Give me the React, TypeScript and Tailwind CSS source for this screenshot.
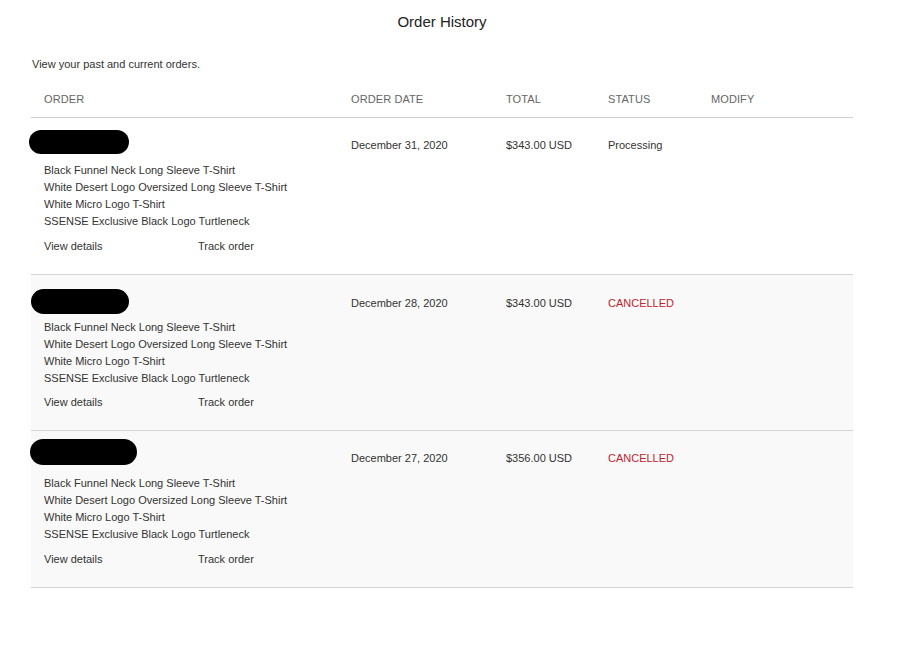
import React from "react";

const items = [
  "Black Funnel Neck Long Sleeve T-Shirt",
  "White Desert Logo Oversized Long Sleeve T-Shirt",
  "White Micro Logo T-Shirt",
  "SSENSE Exclusive Black Logo Turtleneck",
];

const orders = [
  { date: "December 31, 2020", total: "$343.00 USD", status: "Processing", cancelled: false, row: "bg-white h-[157px]", pt: "pt-[19px]", blob: "w-[100px] h-[24px] mt-[12px] -ml-[15px]", mt: "mt-[8px]", lk: "mt-[8px]" },
  { date: "December 28, 2020", total: "$343.00 USD", status: "CANCELLED", cancelled: true, row: "bg-[#f8f9f8] h-[156px]", pt: "pt-[20px]", blob: "w-[98px] h-[25px] mt-[14px] -ml-[13px]", mt: "mt-[5px]", lk: "mt-[7px]" },
  { date: "December 27, 2020", total: "$356.00 USD", status: "CANCELLED", cancelled: true, row: "bg-[#f8f9f8] h-[157px]", pt: "pt-[19px]", blob: "w-[107px] h-[26px] mt-[8px] -ml-[14px]", mt: "mt-[10px]", lk: "mt-[8px]" },
];

export default function App() {
  return (
    <div className="w-[904px] h-[662px] bg-white text-[#333] font-['Liberation_Sans',Arial,sans-serif]">
      <div className="pt-[13px] pr-[20px] text-center text-[15px] leading-[18px] text-[#222]">Order History</div>
      <div className="pl-[32px] pt-[26px] text-[11px] leading-[14px] text-[#333]">View your past and current orders.</div>
      <div className="ml-[31px] w-[822px] mt-[13px]">
        <div className="grid grid-cols-[320px_155px_102px_103px_1fr] h-[34px] pb-[3px] items-center border-b border-[#cfcfcf] text-[11px] text-[#666] tracking-[0.1px]">
          <div className="pl-[13px]">ORDER</div>
          <div>ORDER DATE</div>
          <div>TOTAL</div>
          <div>STATUS</div>
          <div>MODIFY</div>
        </div>
        {orders.map((o, i) => (
          <div key={i} className={`grid grid-cols-[320px_155px_102px_103px_1fr] border-b border-[#d4d4d4] text-[11px] ${o.row}`}>
            <div className="pl-[13px] flex flex-col">
              <div className={`bg-black rounded-full ${o.blob}`} />
              <div className={`flex flex-col leading-[17px] ${o.mt}`}>
                {items.map((it) => (
                  <div key={it}>{it}</div>
                ))}
              </div>
              <div className={`flex leading-[17px] ${o.lk}`}>
                <div className="w-[154px]">View details</div>
                <div>Track order</div>
              </div>
            </div>
            <div className={`${o.pt} leading-[17px]`}>{o.date}</div>
            <div className={`${o.pt} leading-[17px]`}>{o.total}</div>
            <div className={`${o.pt} leading-[17px] ${o.cancelled ? "text-[#c0242f]" : "text-[#333]"}`}>{o.status}</div>
            <div />
          </div>
        ))}
      </div>
    </div>
  );
}
